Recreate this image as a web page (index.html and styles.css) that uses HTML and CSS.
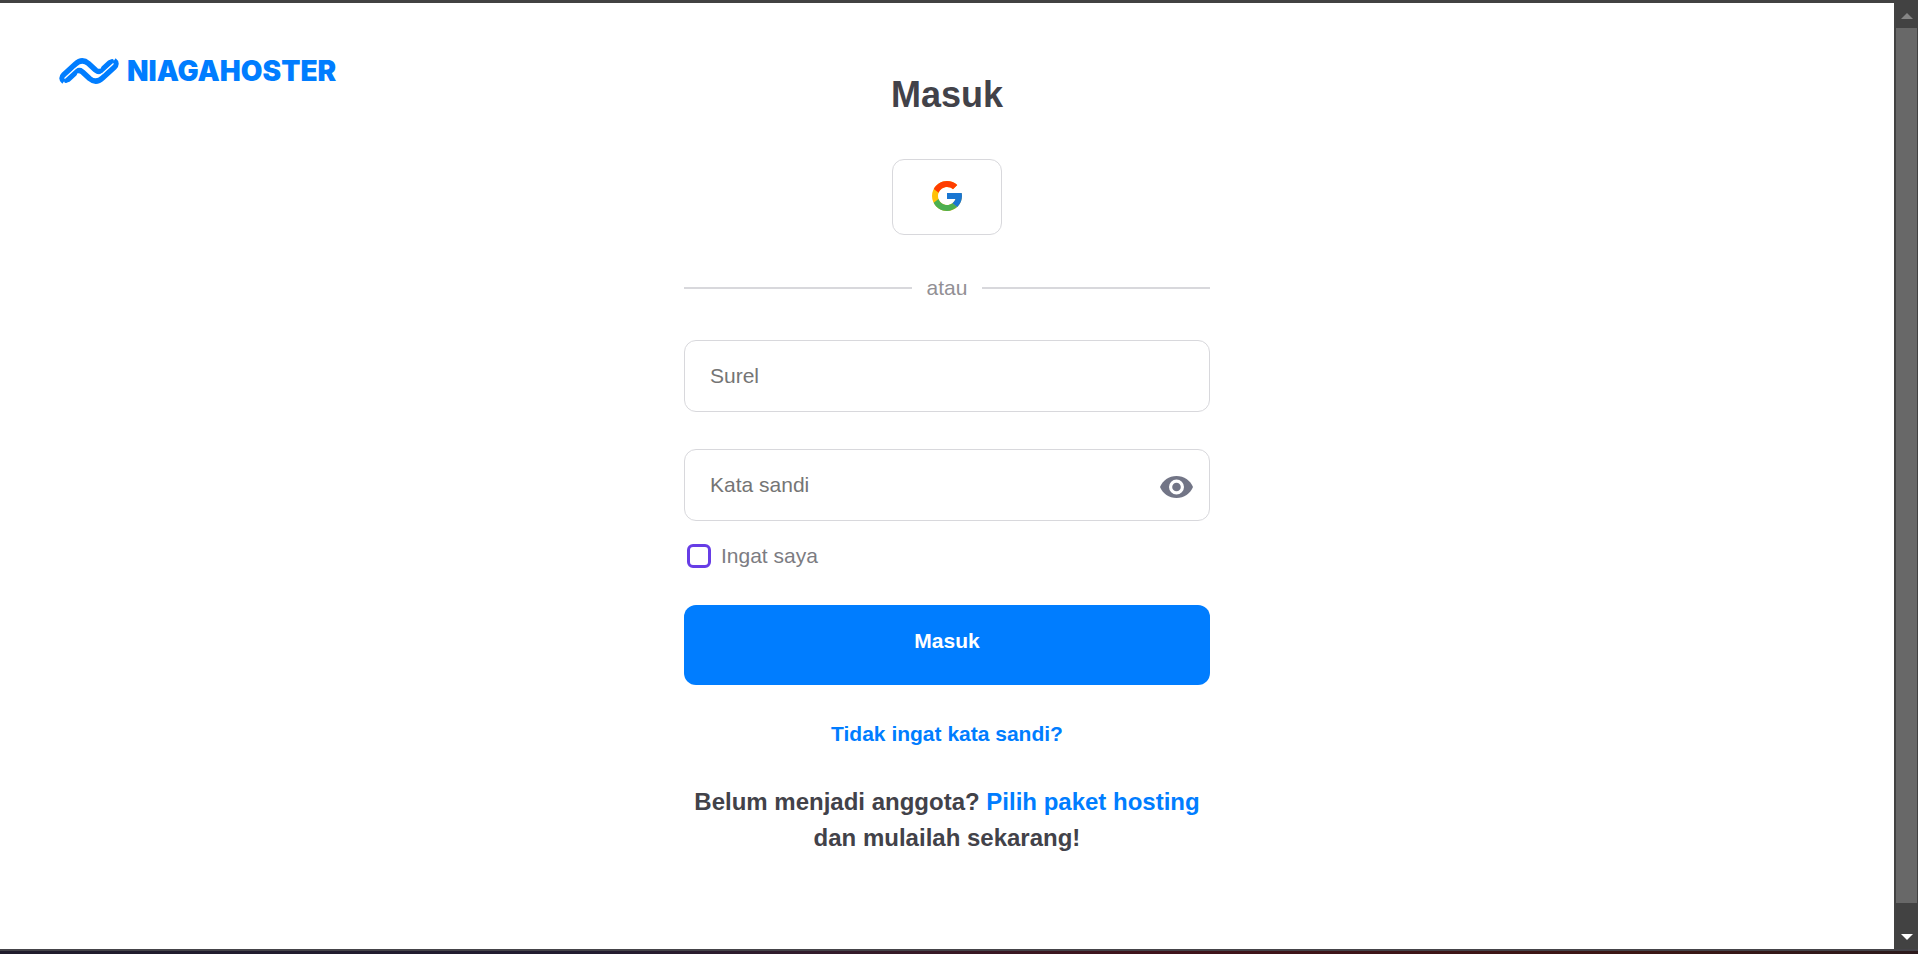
FILE: index.html
```html
<!DOCTYPE html>
<html lang="id">
<head>
<meta charset="utf-8">
<meta name="viewport" content="width=device-width, initial-scale=1">
<title>Masuk - Niagahoster</title>
<link rel="stylesheet" href="styles.css">
</head>
<body>
<div class="edge-top"></div>
<div class="viewport">
  <div class="page">
    <header class="header">
      <a class="brand" href="#" aria-label="Niagahoster">
        <svg class="brand-mark" viewBox="0 0 60 28" width="60" height="28" aria-hidden="true">
          <g fill="none" stroke="#007dff" stroke-width="5.500" stroke-linejoin="round">
            <path d="M5 24.500 Q1 21.500 5 17.500 L16.500 7 Q23 1 29.500 6.500 L36.500 13 Q40.500 16.500 45 12.500 L53 5"/>
            <path d="M55 3.500 Q59 6.500 55 10.500 L43.500 21 Q37 27 30.500 21.500 L23.500 15 Q19.500 11.500 15 15.500 L7 23"/>
            <path stroke-width="4" stroke-linecap="round" d="M7 24 L9.500 23 L16 17 M53 4 L50.500 5 L44 11"/>
            <path stroke="#fff" stroke-width="1.200" d="M5.500 21.500 L16 12 Q19.500 9 23 10"/>
            <path stroke="#fff" stroke-width="1.200" d="M54.500 6.500 L44 16 Q40.500 19 37 18"/>
          </g>
        </svg>
        <span class="brand-name">NIAGAHOSTER</span>
      </a>
    </header>
    <main class="login">
      <h1 class="title">Masuk</h1>
      <button class="google" type="button" aria-label="Masuk dengan Google">
        <svg viewBox="4 4 40 40" width="30" height="30" aria-hidden="true">
          <path fill="#ffc107" d="M43.6 20H24v8h11.3C33.700 32.700 29.200 36 24 36c-6.600 0-12-5.400-12-12s5.400-12 12-12c3.100 0 5.800 1.200 8 3l5.700-5.700C34 6.100 29.300 4 24 4 13 4 4 13 4 24s9 20 20 20 20-9 20-20c0-1.300-.1-2.700-.4-4z"/>
          <path fill="#ff3d00" d="M6.300 14.700l6.600 4.800C14.700 15.100 19 12 24 12c3.100 0 5.800 1.200 8 3l5.700-5.700C34 6.100 29.300 4 24 4 16.300 4 9.700 8.300 6.300 14.700z"/>
          <path fill="#4caf50" d="M24 44c5.200 0 9.900-2 13.400-5.200l-6.200-5.200C29.200 35 26.700 36 24 36c-5.200 0-9.600-3.300-11.300-8l-6.500 5C9.500 39.600 16.200 44 24 44z"/>
          <path fill="#1976d2" d="M43.600 20H24v8h11.300c-.8 2.200-2.200 4.200-4.100 5.600l6.200 5.200C37 39.200 44 34 44 24c0-1.300-.1-2.700-.4-4z"/>
        </svg>
      </button>
      <div class="divider"><span>atau</span></div>
      <form class="form">
        <input class="field" type="email" placeholder="Surel" aria-label="Surel">
        <div class="password">
          <input class="field" type="password" placeholder="Kata sandi" aria-label="Kata sandi">
          <button class="reveal" type="button" aria-label="Tampilkan kata sandi">
            <svg viewBox="0 0 33 22" width="33" height="22" aria-hidden="true">
              <path fill="#727586" d="M16.500 0C9 0 2.600 4.600 0 11c2.600 6.400 9 11 16.500 11S30.400 17.400 33 11C30.400 4.600 24 0 16.500 0z"/>
              <circle cx="16.500" cy="11" r="5.900" fill="#727586" stroke="#fff" stroke-width="3.200"/>
            </svg>
          </button>
        </div>
        <label class="remember"><input class="check" type="checkbox"><span>Ingat saya</span></label>
        <button class="submit" type="submit">Masuk</button>
      </form>
      <a class="forgot" href="#">Tidak ingat kata sandi?</a>
      <p class="signup">Belum menjadi anggota? <a href="#">Pilih paket hosting</a> dan mulailah sekarang!</p>
    </main>
  </div>
  <div class="scrollbar" aria-hidden="true">
    <svg class="arrow" viewBox="0 0 12 6" width="12" height="6"><path fill="#858585" d="M6 0l6 6H0z"/></svg>
    <div class="thumb"></div>
    <svg class="arrow" viewBox="0 0 12 6" width="12" height="6"><path fill="#fff" d="M0 0h12L6 6z"/></svg>
  </div>
</div>
<div class="edge-bottom"></div>
</body>
</html>
```
FILE: styles.css
```css
*, *::before, *::after { box-sizing: border-box; }

body {
  margin: 0;
  min-height: 100vh;
  display: flex;
  flex-direction: column;
  background: #fff;
  color: #424249;
  font-family: "Liberation Sans", Arial, sans-serif;
  font-size: 21px;
  line-height: 24px;
}

a { color: #007dff; text-decoration: none; }
button, input { font: inherit; }
button { cursor: pointer; }
svg { display: block; }

.edge-top { height: 3px; background: #424242; }

.edge-bottom {
  height: 5px;
  border-top: 2px solid #454449;
  background: linear-gradient(90deg, #201c2c 0%, #211c30 30%, #321c2c 42%, #40141c 60%, #3c1614 85%, #2c1a1c 100%);
}

.viewport { flex: 1; display: flex; }

.page {
  flex: 1;
  display: grid;
  grid-template-columns: 1fr minmax(0, 526px) 1fr;
}

.header { padding: 54px 0 0 59px; }

.brand { display: inline-flex; align-items: center; gap: 8px; }

.brand-name {
  font-family: Inter, sans-serif;
  font-weight: 900;
  font-size: 28px;
  line-height: 28px;
}

.login {
  grid-column: 2;
  display: flex;
  flex-direction: column;
  align-items: center;
  padding: 70px 0 88px;
}

.title { margin: 0; font-size: 36px; line-height: 44px; }

.google {
  display: flex;
  align-items: flex-start;
  justify-content: center;
  width: 110px;
  height: 76px;
  margin-top: 42px;
  padding: 21px 0 0;
  border: 1px solid #d8d8dc;
  border-radius: 12px;
  background: #fff;
}

.divider {
  align-self: stretch;
  display: flex;
  align-items: center;
  gap: 15px;
  margin-top: 41px;
  color: #929095;
}

.divider::before, .divider::after {
  content: "";
  flex: 1;
  height: 2px;
  background: #d8d8dc;
}

.form {
  align-self: stretch;
  display: flex;
  flex-direction: column;
  margin-top: 40px;
}

.field {
  display: block;
  width: 100%;
  height: 72px;
  padding: 0 25px;
  border: 1px solid #d8d8dc;
  border-radius: 12px;
  background: #fff;
  color: #424249;
}

.field::placeholder { color: #757575; opacity: 1; }

.password { position: relative; margin-top: 37px; }

.reveal {
  position: absolute;
  top: 27px;
  right: 17px;
  padding: 0;
  border: 0;
  background: none;
}

.remember {
  display: flex;
  align-items: center;
  gap: 10px;
  margin-top: 23px;
  padding-left: 3px;
  color: #7c7c82;
}

.check {
  appearance: none;
  width: 24px;
  height: 24px;
  margin: 0;
  border: 3px solid #673de6;
  border-radius: 6px;
}

.check:checked { background: #673de6; }

.submit {
  height: 80px;
  margin-top: 37px;
  padding: 0 0 8px;
  border: 0;
  border-radius: 12px;
  background: #007dff;
  color: #fff;
  font-weight: 700;
}

.forgot { margin-top: 37px; font-weight: 700; }

.signup {
  margin: 38px 0 0;
  font-size: 24px;
  line-height: 36px;
  font-weight: 700;
  text-align: center;
}

.scrollbar {
  width: 24px;
  display: flex;
  flex-direction: column;
  align-items: center;
  gap: 9px;
  padding: 10px 1px 9px 2px;
  background: #424242;
}

.thumb { flex: 1; align-self: stretch; margin-bottom: 22px; background: #686868; }
```
